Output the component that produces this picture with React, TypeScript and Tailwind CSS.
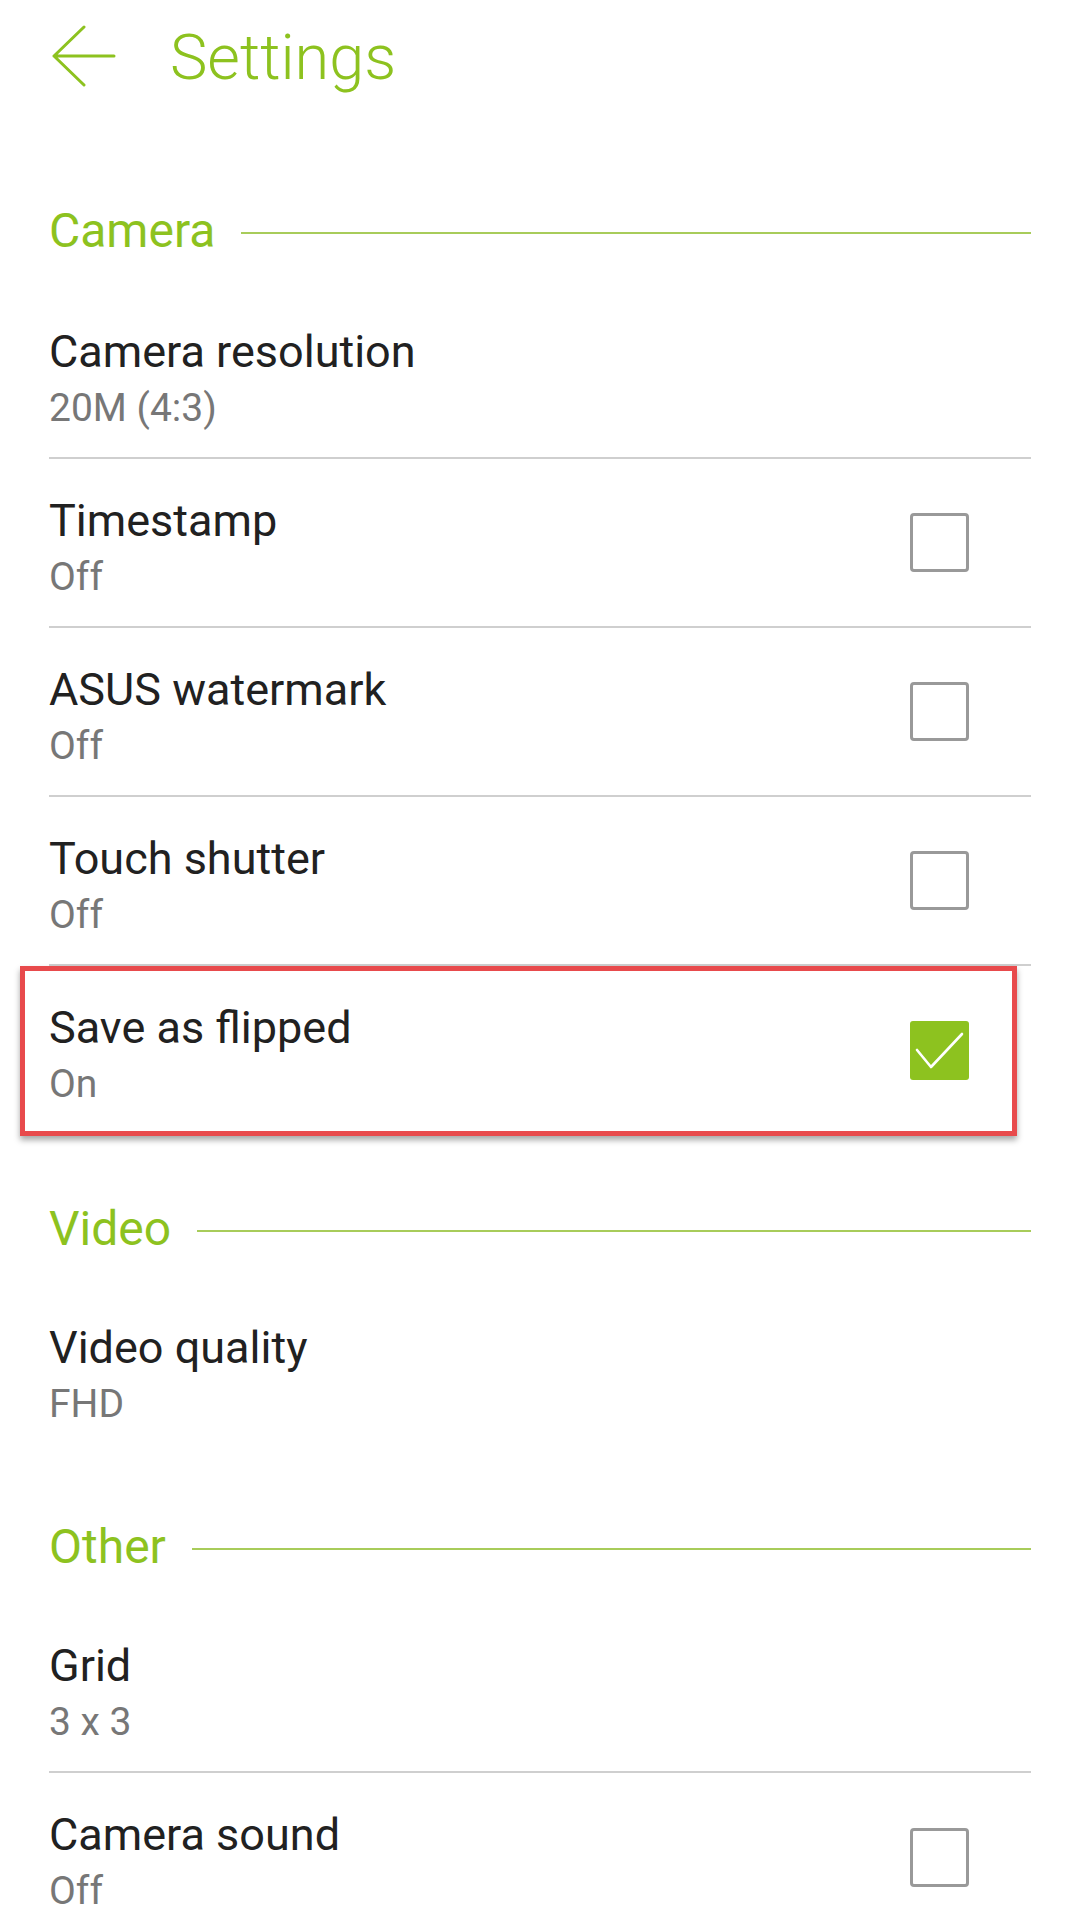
import React from 'react';

type Item = {
  title: string;
  value: string;
  toggle?: boolean;
  checked?: boolean;
  highlight?: boolean;
};

type Section = {
  name: string;
  items: Item[];
};

const sections: Section[] = [
  {
    name: 'Camera',
    items: [
      { title: 'Camera resolution', value: '20M (4:3)' },
      { title: 'Timestamp', value: 'Off', toggle: true },
      { title: 'ASUS watermark', value: 'Off', toggle: true },
      { title: 'Touch shutter', value: 'Off', toggle: true },
      { title: 'Save as flipped', value: 'On', toggle: true, checked: true, highlight: true },
    ],
  },
  {
    name: 'Video',
    items: [{ title: 'Video quality', value: 'FHD' }],
  },
  {
    name: 'Other',
    items: [
      { title: 'Grid', value: '3 x 3' },
      { title: 'Camera sound', value: 'Off', toggle: true },
    ],
  },
];

const Checkbox: React.FC<{ checked?: boolean }> = ({ checked }) =>
  checked ? (
    <div className="w-[59px] h-[59px] rounded-[3px] bg-[#8dc21f] flex items-center justify-center">
      <svg width="59" height="59" viewBox="0 0 59 59" fill="none">
        <path d="M7 29 L21 46 L52 13" stroke="#ffffff" strokeWidth="2.6" strokeLinecap="round" strokeLinejoin="round" />
      </svg>
    </div>
  ) : (
    <div className="w-[59px] h-[59px] rounded-[4px] border-[3px] border-[#999999] bg-white" />
  );

const Row: React.FC<{ item: Item; last: boolean }> = ({ item, last }) => (
  <div className={`relative h-[169px] flex items-start ${last ? '' : 'border-b-2 border-[#cfcfcf]'}`}>
    <div className="flex-1 pt-[35px]">
      <div className="text-[45px] leading-[54px] text-[#212121]">{item.title}</div>
      <div className="mt-[4px] text-[39px] leading-[50px] text-[#777777]">{item.value}</div>
    </div>
    {item.toggle && (
      <div className="self-center mr-[62px]">
        <Checkbox checked={item.checked} />
      </div>
    )}
    {item.highlight && (
      <div className="absolute left-[-29px] right-[14px] top-0 bottom-[-1px] border-[5px] border-[#e84a4c] shadow-[0_4px_6px_rgba(0,0,0,0.35)] pointer-events-none" />
    )}
  </div>
);

const App: React.FC = () => {
  return (
    <div className="w-[1080px] h-[1930px] overflow-hidden bg-white" style={{ fontFamily: 'Roboto, "Noto Sans", sans-serif' }}>
      {/* top bar */}
      <div className="h-[114px] flex items-center px-[52px]">
        <svg width="64" height="64" viewBox="0 0 64 64" fill="none">
          <path d="M2 31 H62 M2 31 L32 2 M2 31 L32 60" stroke="#8dc21f" strokeWidth="3" strokeLinecap="round" />
        </svg>
        <span className="ml-[54px] text-[63px] font-light text-[#8dc21f] leading-none">Settings</span>
      </div>

      <div className="px-[49px]">
        {sections.map((section, i) => (
          <div key={section.name}>
            <div
              className={`flex items-center gap-[26px] ${
                i === 0 ? 'pt-[93px] pb-[35px]' : i === 1 ? 'pt-[70px] pb-[33px]' : 'pt-[68px] pb-[33px]'
              }`}
            >
              <span className="text-[48px] leading-[48px] text-[#8dc21f]">{section.name}</span>
              <div className="flex-1 h-[2px] bg-[#a8cc5a] mt-[4px]" />
            </div>
            {section.items.map((item, j) => (
              <Row key={item.title} item={item} last={j === section.items.length - 1} />
            ))}
          </div>
        ))}
      </div>
    </div>
  );
};

export default App;
